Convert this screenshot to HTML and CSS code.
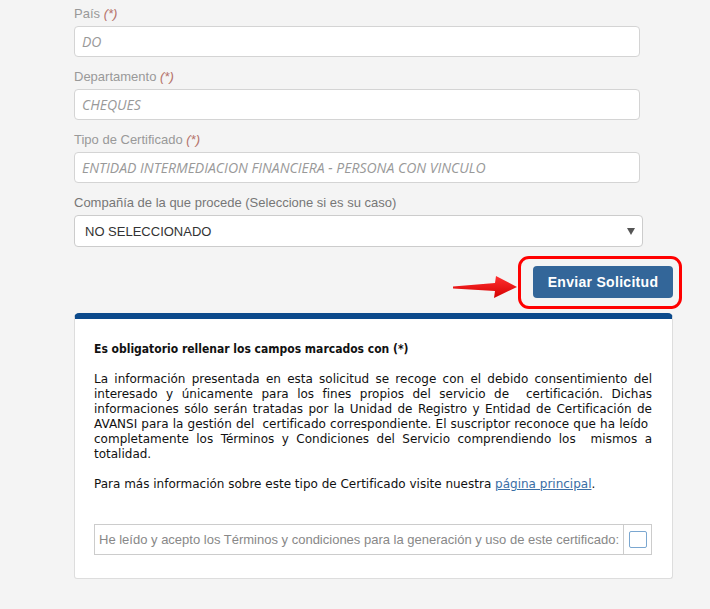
FILE: index.html
```html
<!DOCTYPE html>
<html lang="es">
<head>
    <meta charset="UTF-8">
    <meta name="viewport" content="width=device-width, initial-scale=1.0">
    <title>Solicitud de Certificado</title>
    <link rel="stylesheet" href="styles.css">
</head>
<body>
    <div class="page">
        <div class="field">
            <label>País <span class="req">(*)</span></label>
            <input type="text" class="text-input" value="DO" readonly>
        </div>
        <div class="field">
            <label>Departamento <span class="req">(*)</span></label>
            <input type="text" class="text-input" value="CHEQUES" readonly>
        </div>
        <div class="field">
            <label>Tipo de Certificado <span class="req">(*)</span></label>
            <input type="text" class="text-input" value="ENTIDAD INTERMEDIACION FINANCIERA - PERSONA CON VINCULO" readonly>
        </div>
        <div class="field">
            <label class="optional">Compañía de la que procede (Seleccione si es su caso)</label>
            <div class="select-wrap">
                <select class="select-input">
                    <option>NO SELECCIONADO</option>
                </select>
            </div>
        </div>

        <div class="actions">
            <svg class="arrow" width="70" height="28" viewBox="0 0 70 28">
                <defs>
                    <linearGradient id="arrowFill" x1="0" y1="0" x2="0" y2="1">
                        <stop offset="0" stop-color="#ff3030"/>
                        <stop offset="1" stop-color="#d40000"/>
                    </linearGradient>
                </defs>
                <polygon points="3,13.5 45,10 46,3 67,14 44,25 45,18 3,15.5" fill="url(#arrowFill)"/>
            </svg>
            <div class="highlight">
                <button type="submit" class="submit-button">Enviar Solicitud</button>
            </div>
        </div>

        <div class="notice">
            <h2>Es obligatorio rellenar los campos marcados con (*)</h2>
            <p class="legal">La información presentada en esta solicitud se recoge con el debido consentimiento del interesado y únicamente para los fines propios del servicio de &nbsp;certificación. Dichas informaciones sólo serán tratadas por la Unidad de Registro y Entidad de Certificación de AVANSI para la gestión del &nbsp;certificado correspondiente. El suscriptor reconoce que ha leído&nbsp; completamente los Términos y Condiciones del Servicio comprendiendo los &nbsp;mismos a totalidad.</p>
            <p class="more">Para más información sobre este tipo de Certificado visite nuestra <a href="#">página principal</a>.</p>

            <div class="terms">
                <span class="terms-text">He leído y acepto los Términos y condiciones para la generación y uso de este certificado:</span>
                <span class="terms-check"><input type="checkbox"></span>
            </div>
        </div>
    </div>
</body>
</html>
```

FILE: styles.css
```css
body {
    margin: 0;
    background-color: #f4f4f4;
    font-family: "Liberation Sans", Arial, sans-serif;
    color: #333;
}

.page {
    width: 599px;
    padding: 4px 0 30px 74px;
}

.field {
    margin-bottom: 10px;
}

.field label {
    display: block;
    font-size: 13px;
    line-height: 20px;
    margin-bottom: 2px;
    color: #999;
}

.field label.optional {
    color: #777;
}

.req {
    color: #b5736b;
    font-style: italic;
}

.text-input {
    display: block;
    box-sizing: border-box;
    width: 566px;
    height: 31px;
    padding: 0 7px;
    border: 1px solid #d4d4d4;
    border-radius: 4px;
    background-color: #fff;
    font-family: "Open Sans", sans-serif;
    font-style: italic;
    font-size: 14px;
    color: #999;
    outline: none;
}

.select-wrap {
    position: relative;
    width: 569px;
}

.select-wrap::after {
    content: "";
    position: absolute;
    right: 8px;
    top: 13px;
    border-left: 4px solid transparent;
    border-right: 4px solid transparent;
    border-top: 7px solid #555;
}

.select-input {
    display: block;
    box-sizing: border-box;
    width: 100%;
    height: 32px;
    padding: 0 10px;
    border: 1px solid #ccc;
    border-radius: 4px;
    background-color: #fff;
    font-family: "Liberation Sans", Arial, sans-serif;
    font-size: 13px;
    color: #333;
    -webkit-appearance: none;
    appearance: none;
}

.actions {
    position: relative;
    display: flex;
    justify-content: flex-end;
    padding-top: 9px;
}

.arrow {
    position: absolute;
    left: 376px;
    top: 16px;
}

.highlight {
    position: relative;
}

.highlight::before {
    content: "";
    position: absolute;
    top: -10px;
    left: -15px;
    right: -9px;
    bottom: -11px;
    border: 3px solid #f00;
    border-radius: 11px;
}

.submit-button {
    display: block;
    width: 140px;
    height: 32px;
    border: none;
    border-radius: 4px;
    background-color: #336699;
    color: #fff;
    font-family: "Liberation Sans", Arial, sans-serif;
    font-weight: bold;
    font-size: 14px;
    letter-spacing: 0.3px;
    cursor: pointer;
}

.notice {
    margin-top: 15px;
    padding: 23px 20px 23px 19px;
    background-color: #fff;
    border: 1px solid #ddd;
    border-top: 6px solid #0c4a8b;
    border-radius: 5px 5px 3px 3px;
    font-family: "DejaVu Sans", sans-serif;
    font-size: 12px;
    line-height: 15px;
    color: #111;
}

.notice h2 {
    margin: 0 0 15px;
    font-family: "DejaVu Sans Condensed", "DejaVu Sans", sans-serif;
    font-size: 12px;
    font-weight: bold;
    line-height: 15px;
}

.legal {
    margin: 0 0 15px;
    text-align: justify;
}

.more {
    margin: 0 0 32px;
}

.more a {
    color: #3a6ea5;
}

.terms {
    display: flex;
    height: 29px;
    border: 1px solid #ccc;
}

.terms-text {
    flex: 1;
    padding: 0 4px;
    font-family: "Liberation Sans", Arial, sans-serif;
    font-size: 13px;
    line-height: 29px;
    color: #888;
    white-space: nowrap;
}

.terms-check {
    display: flex;
    align-items: center;
    justify-content: center;
    width: 29px;
    border-left: 1px solid #ccc;
}

.terms-check input {
    -webkit-appearance: none;
    appearance: none;
    width: 18px;
    height: 17px;
    margin: 0;
    border: 1px solid #7ba7d0;
    border-radius: 2px;
    background-color: #fff;
}
```
